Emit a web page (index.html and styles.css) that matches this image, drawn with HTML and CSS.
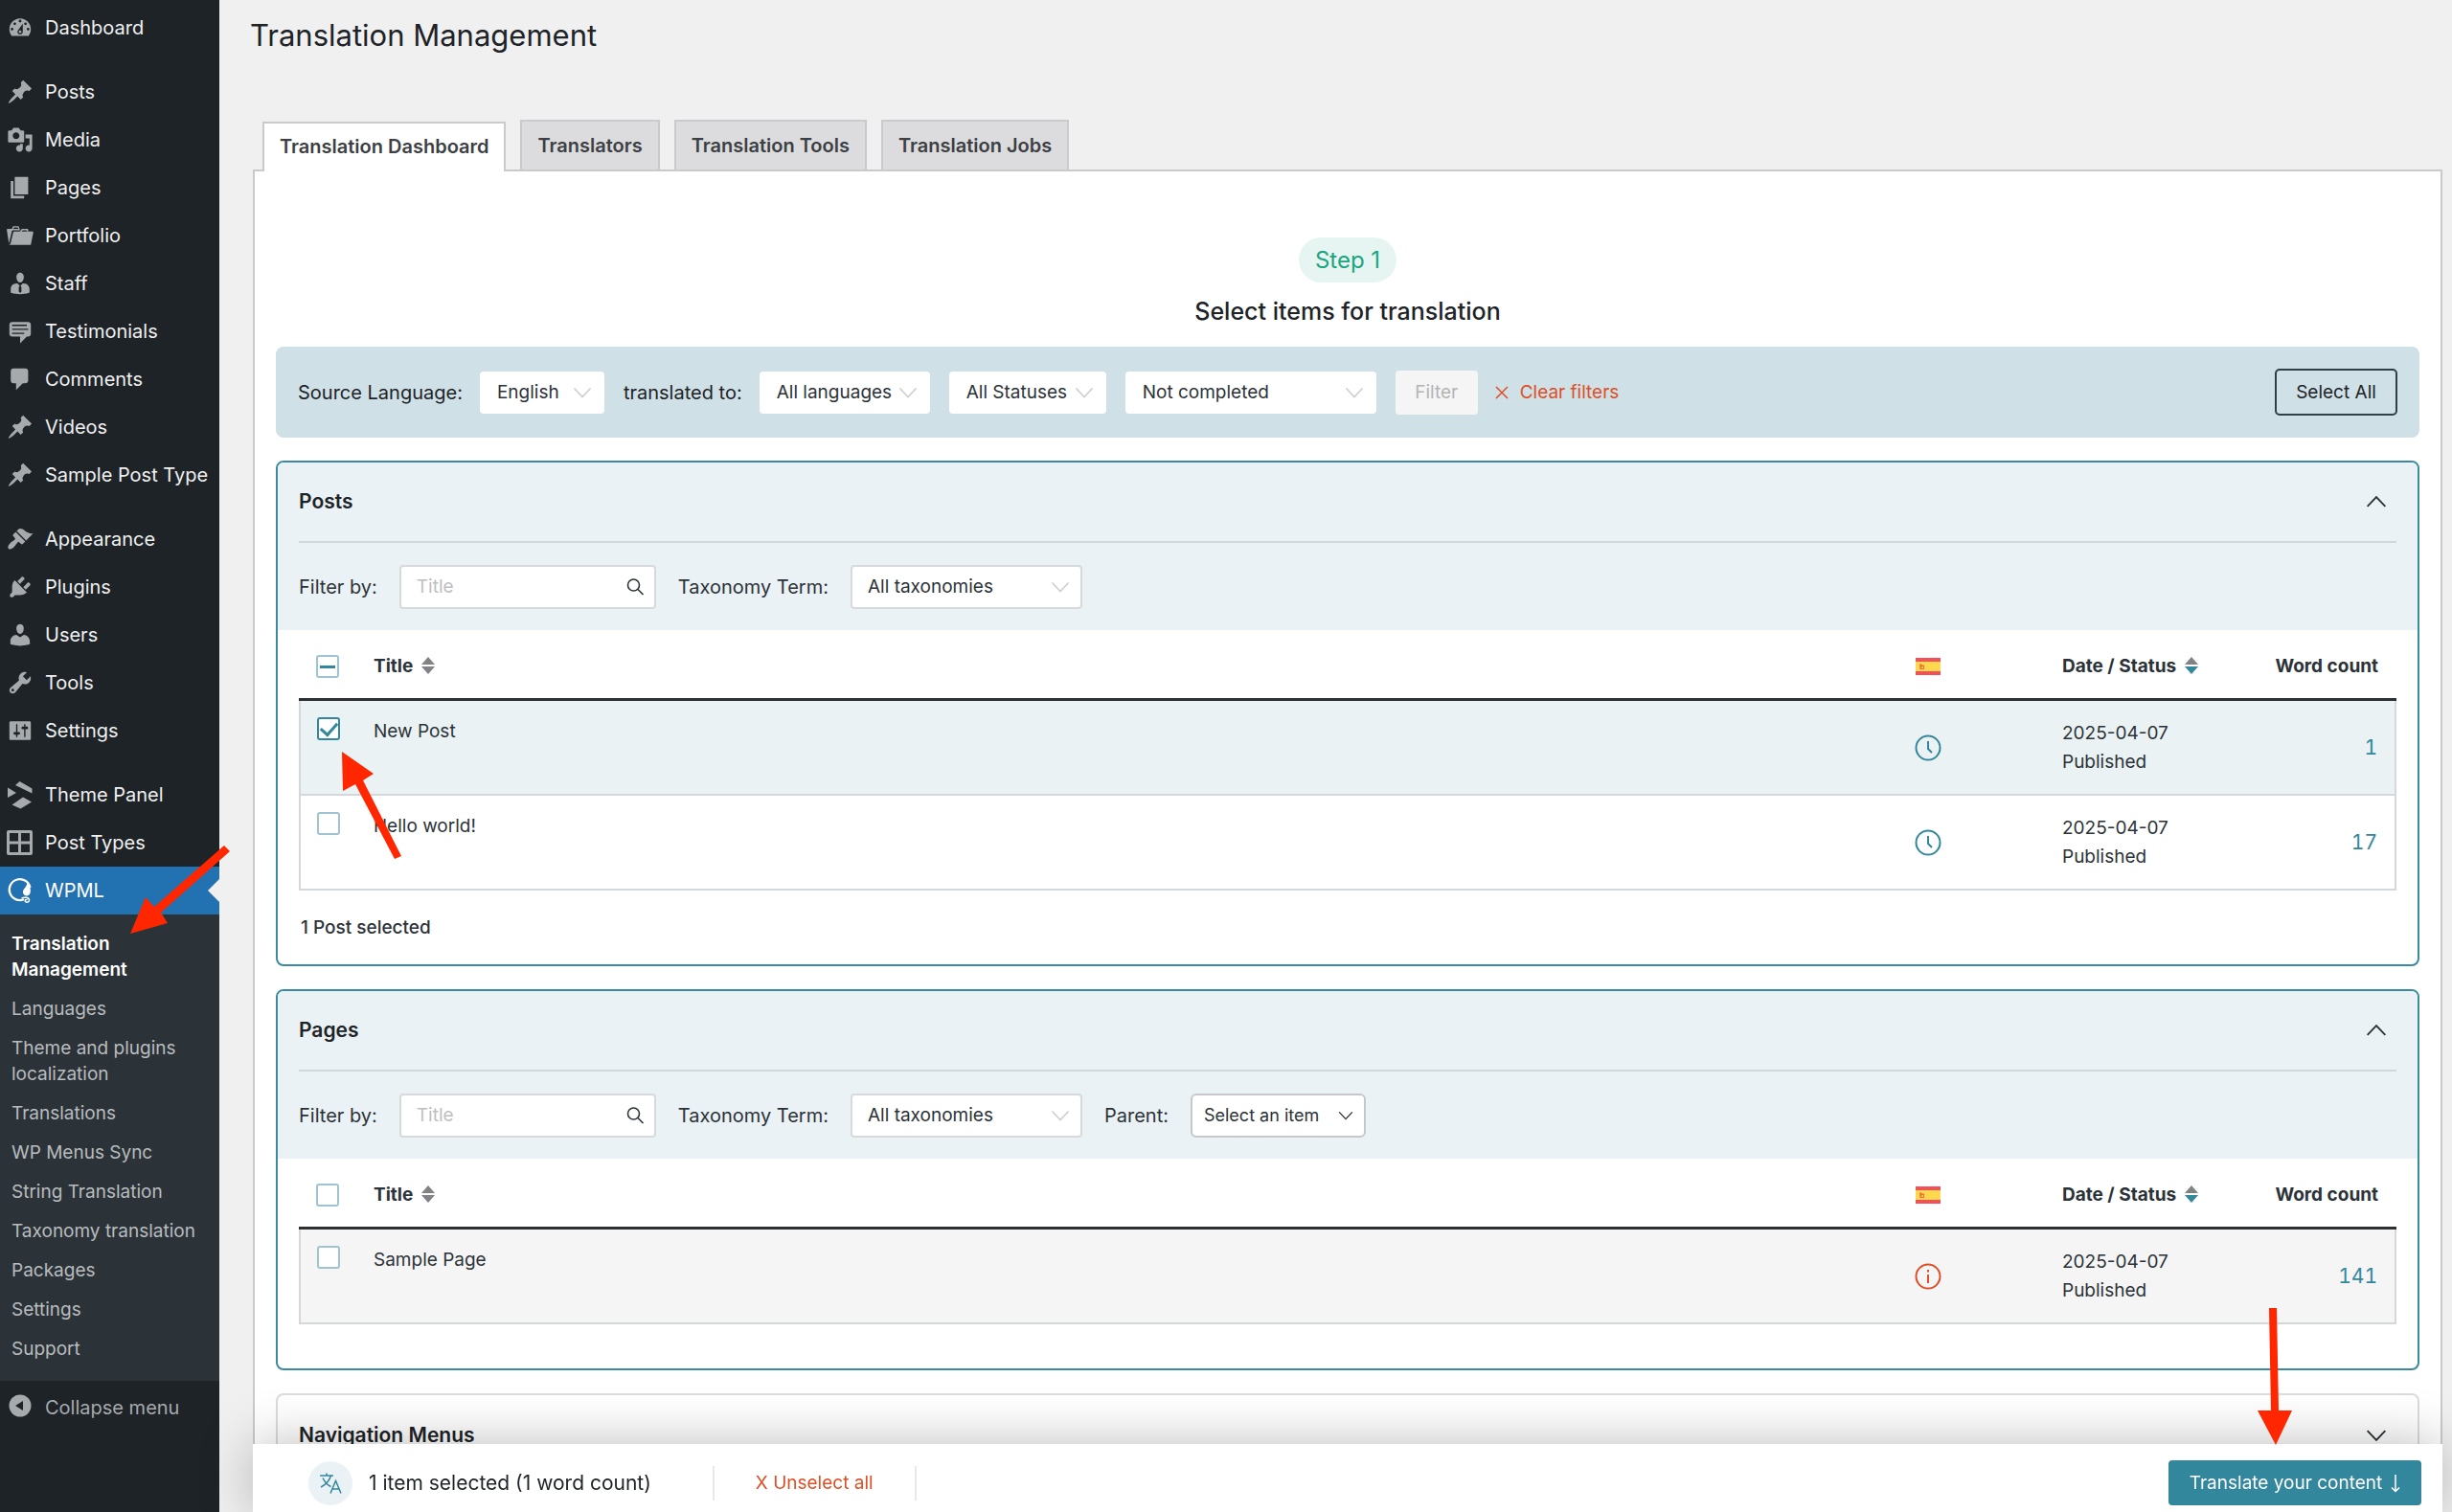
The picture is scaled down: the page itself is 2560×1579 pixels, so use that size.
FILE: index.html
```html
<!DOCTYPE html>
<html lang="en">
<head>
<meta charset="utf-8">
<meta name="viewport" content="width=device-width, initial-scale=1">
<title>Translation Management</title>
<link rel="stylesheet" href="styles.css">
</head>
<body>
<svg class="sprite" aria-hidden="true">
  <symbol id="pin" viewBox="0 0 20 20"><path d="M10.44 3.02l1.82-1.82 6.36 6.35-1.83 1.82c-1.05-.68-2.48-.57-3.41.36l-.75.75c-.92.93-1.04 2.35-.35 3.41l-1.83 1.82-2.41-2.41-2.8 2.79c-.42.42-3.38 2.71-3.8 2.29s1.86-3.39 2.28-3.81l2.79-2.79L4.1 9.36l1.83-1.82c1.05.69 2.48.57 3.4-.36l.75-.75c.93-.92 1.05-2.35.36-3.41z"/></symbol>
  <symbol id="down" viewBox="0 0 20 20"><path d="M1.500 5.500 10 14.500 18.500 5.500" fill="none" stroke="currentColor" stroke-width="1.700"/></symbol>
  <symbol id="search" viewBox="0 0 20 20"><g fill="none" stroke="currentColor" stroke-width="1.600"><circle cx="8.500" cy="8" r="6"/><path d="M13 12.500 18.500 18"/></g></symbol>
  <symbol id="flag" viewBox="0 0 26 18"><path fill="#f4505a" d="M0 0h26v18H0z"/><path fill="#ffd94d" d="M0 4h26v10H0z"/><path fill="#f0703c" d="M4 6.500h2l1 1h2v4.500H4.500z"/><path fill="#ffd94d" d="M6.500 9h1.500v2H6.500z"/></symbol>
  <symbol id="clock" viewBox="0 0 28 28"><g fill="none" stroke="currentColor" stroke-width="2"><circle cx="14" cy="14" r="12.500"/><path d="M14 7v8l4 4"/></g></symbol>
  <symbol id="info" viewBox="0 0 28 28"><circle cx="14" cy="14" r="12.500" fill="none" stroke="currentColor" stroke-width="2"/><path d="M13 7h2v2.500h-2zM13 12h2v9h-2z" fill="currentColor"/></symbol>
  <symbol id="sort" viewBox="0 0 14 18"><path d="M7 0l7 8H0z" fill="#808285"/><path d="M0 10h14l-7 8z" fill="currentColor"/></symbol>
</svg>
<div class="shell">
  <nav class="sidebar" aria-label="Main menu">
    <ul class="menu">
      <li><a href="#"><svg class="icon" viewBox="0 0 20 20"><path d="M3.760 16h12.480c1.100-1.370 1.760-3.110 1.760-5 0-4.420-3.580-8-8-8s-8 3.580-8 8c0 1.890.66 3.630 1.760 5zM10 4c.55 0 1 .45 1 1s-.45 1-1 1-1-.45-1-1 .45-1 1-1zM6 6c.55 0 1 .45 1 1s-.45 1-1 1-1-.45-1-1 .45-1 1-1zm8 0c.55 0 1 .45 1 1s-.45 1-1 1-1-.45-1-1 .45-1 1-1zm-5.370 5.550L12 7v6c0 1.100-.9 2-2 2s-2-.9-2-2c0-.57.24-1.080.63-1.450zM4 10c.55 0 1 .45 1 1s-.45 1-1 1-1-.45-1-1 .45-1 1-1zm12 0c.55 0 1 .45 1 1s-.45 1-1 1-1-.45-1-1 .45-1 1-1zm-5 3c0-.55-.45-1-1-1s-1 .45-1 1 .45 1 1 1 1-.45 1-1z"/></svg>Dashboard</a></li>
      <li class="gap"><a href="#"><svg class="icon"><use href="#pin"/></svg>Posts</a></li>
      <li><a href="#"><svg class="icon" viewBox="0 0 20 20"><path d="M13 11V4c0-.55-.45-1-1-1h-1.670L9 1H5L3.670 3H2c-.55 0-1 .45-1 1v7c0 .55.45 1 1 1h10c.55 0 1-.45 1-1zM7 4.500c1.380 0 2.500 1.120 2.500 2.500S8.380 9.500 7 9.500 4.500 8.380 4.500 7 5.620 4.500 7 4.500zM14 6h5v10.500c0 1.380-1.120 2.500-2.500 2.500S14 17.880 14 16.500s1.120-2.500 2.500-2.500c.17 0 .34.02.5.05V9h-3V6zm-4 8.050V13h2v3.500c0 1.380-1.120 2.500-2.500 2.500S7 17.880 7 16.500 8.120 14 9.500 14c.17 0 .34.02.5.05z"/></svg>Media</a></li>
      <li><a href="#"><svg class="icon" viewBox="0 0 20 20"><path d="M6 15V2h10v13H6zm-1 1h8v2H3V5h2v11z"/></svg>Pages</a></li>
      <li><a href="#"><svg class="icon" viewBox="0 0 20 20"><path d="M4 5H.78c-.37 0-.74.32-.69.84l1.560 9.990S3.500 8.470 3.860 6.700c.11-.53.61-.7.98-.7H10s-.7-2.080-.77-2.310C9.110 3.250 8.890 3 8.450 3H5.140c-.36 0-.7.23-.8.64C4.250 4.040 4 5 4 5zm4.880 0h-4s.42-1 .87-1h2.130c.48 0 1 1 1 1zM2.670 16.250c-.31.47-.76.75-1.260.75h15.730c.54 0 .92-.31 1.030-.83.44-2.190 1.680-8.440 1.680-8.440.07-.5-.3-.73-.62-.73H16V5.530c0-.16-.26-.53-.66-.53h-3.760c-.52 0-.87.58-.87.58L10 7H5.590c-.32 0-.63.19-.69.5 0 0-1.590 6.700-1.720 7.330-.07.37-.22.99-.51 1.420zM15.380 7H11s.58-1 1.130-1h2.290c.71 0 .96 1 .96 1z"/></svg>Portfolio</a></li>
      <li><a href="#"><svg class="icon" viewBox="0 0 20 20"><path d="M7.300 6c-.3-2.200.8-4 2.700-4s3.100 1.800 2.700 4c-.3 1.900-1.300 3.300-2.700 3.300S7.600 7.900 7.300 6zm9.200 6.240c.41.7.5 1.410.5 2.140v2.490c0 .03-.12.08-.29.13-2.200.7-4.500 1-6.700 1-2.300 0-4.700-.3-6.740-1L3 16.870v-2.490c0-.75.07-1.460.46-2.150s.81-1.250 1.500-1.680C5.660 10.120 7.190 10 8 10l1.670 1.670L9 13v3l1.020 1.080L11 16v-3l-.68-1.330L11.970 10c.77 0 2.200.07 2.900.52.71.45 1.210 1.020 1.630 1.720z"/></svg>Staff</a></li>
      <li><a href="#"><svg class="icon" viewBox="0 0 20 20"><path d="M4 3h12c.55 0 1.020.2 1.410.59S18 4.450 18 5v7c0 .55-.2 1.020-.59 1.410S16.550 14 16 14h-1l-5 5v-5H4c-.55 0-1.020-.2-1.410-.59S2 12.550 2 12V5c0-.55.2-1.020.59-1.410S3.450 3 4 3zm11 2H4v1h11V5zm1 3H4v1h12V8zm-3 3H4v1h9v-1z"/></svg>Testimonials</a></li>
      <li><a href="#"><svg class="icon" viewBox="0 0 20 20"><path d="M5 2h9c1.100 0 2 .9 2 2v7c0 1.100-.9 2-2 2h-2l-5 5v-5H5c-1.100 0-2-.9-2-2V4c0-1.100.9-2 2-2z"/></svg>Comments</a></li>
      <li><a href="#"><svg class="icon"><use href="#pin"/></svg>Videos</a></li>
      <li><a href="#"><svg class="icon"><use href="#pin"/></svg>Sample Post Type</a></li>
      <li class="gap"><a href="#"><svg class="icon" viewBox="0 0 20 20"><path d="M14.480 11.060L7.410 3.990l1.500-1.500c.5-.56 2.300-.47 3.510.32 1.210.8 1.430 1.280 2.910 2.100 1.180.64 2.450 1.260 4.450.85zm-.71.71L6.700 4.700 4.930 6.470c-.39.39-.39 1.020 0 1.410l1.060 1.060c.39.39.39 1.030 0 1.420-.6.6-1.430 1.110-2.210 1.690-.35.26-.7.53-1.010.84C1.430 14.230.4 16.080 1.400 17.070c.99 1 2.840-.03 4.180-1.360.31-.31.58-.66.85-1.020.57-.78 1.080-1.610 1.690-2.210.39-.39 1.020-.39 1.410 0l1.060 1.060c.39.39 1.020.39 1.410 0z"/></svg>Appearance</a></li>
      <li><a href="#"><svg class="icon" viewBox="0 0 20 20"><path d="M13.110 4.360L9.870 7.600 8 5.730l3.240-3.240c.35-.34 1.050-.2 1.560.32.52.51.66 1.210.31 1.550zm-8 1.770l.91-1.120 9.010 9.010-1.190.84c-.71.71-2.630 1.160-3.820 1.160H6.140L4.900 17.260c-.59.59-1.540.59-2.120 0-.59-.58-.59-1.530 0-2.120l1.240-1.240v-3.880c0-1.130.4-3.190 1.090-3.890zm7.260 3.970l3.240-3.240c.34-.35 1.040-.21 1.550.31.52.51.66 1.210.31 1.550l-3.240 3.250z"/></svg>Plugins</a></li>
      <li><a href="#"><svg class="icon" viewBox="0 0 20 20"><path d="M10 9.250c-2.270 0-2.730-3.440-2.730-3.440C7 4.020 7.820 2 9.970 2c2.160 0 2.980 2.020 2.710 3.810 0 0-.41 3.440-2.680 3.440zm0 2.570L12.720 10c2.390 0 4.520 2.330 4.520 4.530v2.490s-3.650 1.130-7.240 1.130c-3.650 0-7.240-1.130-7.240-1.130v-2.490c0-2.250 1.940-4.480 4.470-4.480z"/></svg>Users</a></li>
      <li><a href="#"><svg class="icon" viewBox="0 0 20 20"><path d="M16.680 9.770c-1.340 1.340-3.300 1.670-4.950.99l-5.410 6.520c-.99.99-2.590.99-3.580 0s-.99-2.590 0-3.570l6.520-5.420c-.68-1.650-.35-3.610.99-4.950 1.280-1.280 3.120-1.620 4.720-1.060l-2.890 2.890 2.820 2.820 2.860-2.870c.53 1.580.18 3.390-1.080 4.650zM3.810 16.210c.4.39 1.040.39 1.430 0 .4-.4.4-1.040 0-1.430-.39-.4-1.030-.4-1.430 0-.39.39-.39 1.030 0 1.430z"/></svg>Tools</a></li>
      <li><a href="#"><svg class="icon" viewBox="0 0 20 20"><path d="M18 16V4c0-.55-.45-1-1-1H3c-.55 0-1 .45-1 1v12c0 .55.45 1 1 1h14c.55 0 1-.45 1-1zM8 11h1c.55 0 1 .45 1 1s-.45 1-1 1H8v1.500c0 .28-.22.5-.5.5s-.5-.22-.5-.5V13H6c-.55 0-1-.45-1-1s.45-1 1-1h1V5.500c0-.28.22-.5.5-.5s.5.22.5.5V11zm5-2h-1c-.55 0-1-.45-1-1s.45-1 1-1h1V5.500c0-.28.22-.5.5-.5s.5.22.5.5V7h1c.55 0 1 .45 1 1s-.45 1-1 1h-1v5.500c0 .28-.22.5-.5.5s-.5-.22-.5-.5V9z"/></svg>Settings</a></li>
      <li class="gap"><a href="#"><svg class="icon" viewBox="0 0 28 28"><path d="M9 4 13.500 0 26.500 7.500V12.500zM1 6.500 10 12 1 17zM5.500 24.500 17 16.500 26 21.500 14.500 28.500z"/></svg>Theme Panel</a></li>
      <li><a href="#"><svg class="icon" viewBox="0 0 28 28"><path fill-rule="evenodd" d="M2 1h23q2 0 2 2v22q0 2-2 2H2q-2 0-2-2V3q0-2 2-2zM3 4v8.500h9V4zM15 4v8.500h9V4zM3 15.500V24h9v-8.500zM15 15.500V24h9v-8.500z"/></svg>Post Types</a></li>
      <li class="current"><a href="#"><svg class="icon" viewBox="0 0 28 28"><path d="M18 23.200A11 11 0 1 1 24.500 11" fill="none" stroke="#fff" stroke-width="2.200"/><path d="M21.500 5.500c2.500 3 3.700 6.500 3.300 10-.4 3-3 4.800-5.300 3.800-2.800-1.200-3.300-4.300-1.500-6.800C19.700 10.300 21.300 8.500 21.500 5.500z"/><path d="M15.500 22c3-1.500 8-1 8 2 0 2.500-4 3-4.300.8-.1-1.500 1.700-1.700 2-.8" fill="none" stroke="#fff" stroke-width="1.500"/></svg>WPML</a></li>
    </ul>
    <ul class="submenu">
      <li><a class="active" href="#">Translation Management</a></li>
      <li><a href="#">Languages</a></li>
      <li><a href="#">Theme and plugins localization</a></li>
      <li><a href="#">Translations</a></li>
      <li><a href="#">WP Menus Sync</a></li>
      <li><a href="#">String Translation</a></li>
      <li><a href="#">Taxonomy translation</a></li>
      <li><a href="#">Packages</a></li>
      <li><a href="#">Settings</a></li>
      <li><a href="#">Support</a></li>
    </ul>
    <button class="collapse" type="button"><svg class="icon" viewBox="0 0 28 28"><path fill-rule="evenodd" d="M14 .5a11.500 11.500 0 1 1 0 23 11.500 11.500 0 0 1 0-23zM9 12l8 5V7z"/></svg>Collapse menu</button>
  </nav>

  <main class="main">
    <h1>Translation Management</h1>
    <nav class="tabs" aria-label="Sections">
      <a class="tab selected" href="#">Translation Dashboard</a>
      <a class="tab" href="#">Translators</a>
      <a class="tab" href="#">Translation Tools</a>
      <a class="tab" href="#">Translation Jobs</a>
    </nav>
    <div class="panel">
      <header class="step">
        <span class="badge">Step 1</span>
        <h2>Select items for translation</h2>
      </header>

      <form class="filters">
        <label for="source">Source Language:</label>
        <span class="pick plain w-english"><select id="source"><option>English</option></select><svg><use href="#down"/></svg></span>
        <label for="target">translated to:</label>
        <span class="pick plain w-languages"><select id="target"><option>All languages</option></select><svg><use href="#down"/></svg></span>
        <span class="pick plain w-statuses"><select aria-label="Status"><option>All Statuses</option></select><svg><use href="#down"/></svg></span>
        <span class="pick plain w-progress"><select aria-label="Progress"><option>Not completed</option></select><svg><use href="#down"/></svg></span>
        <button class="filter-button" type="button" disabled>Filter</button>
        <button class="clear" type="button"><svg viewBox="0 0 14 14"><path d="M1 1l12 12M13 1L1 13" stroke="currentColor" stroke-width="1.500"/></svg>Clear filters</button>
        <button class="select-all" type="button">Select All</button>
      </form>

      <section class="card">
        <div class="card-head">
          <div class="card-title"><h3>Posts</h3><button type="button" aria-label="Collapse Posts"><svg class="up"><use href="#down"/></svg></button></div>
          <div class="card-filters">
            <label for="post-title">Filter by:</label>
            <span class="search"><input id="post-title" type="text" placeholder="Title"><svg><use href="#search"/></svg></span>
            <label for="post-tax">Taxonomy Term:</label>
            <span class="pick w-tax"><select id="post-tax"><option>All taxonomies</option></select><svg><use href="#down"/></svg></span>
          </div>
        </div>
        <table>
          <colgroup><col class="c-check"><col><col class="c-lang"><col class="c-date"><col class="c-count"></colgroup>
          <thead><tr>
            <th><input class="mixed" type="checkbox" aria-label="Select all posts"></th>
            <th>Title <svg class="sort"><use href="#sort"/></svg></th>
            <th><svg class="flag" role="img" aria-label="Spanish"><use href="#flag"/></svg></th>
            <th>Date / Status <svg class="sort on"><use href="#sort"/></svg></th>
            <th class="num">Word count</th>
          </tr></thead>
          <tbody>
            <tr class="chosen">
              <td class="top"><input id="p1" type="checkbox" checked></td>
              <td class="top"><label for="p1">New Post</label></td>
              <td><svg class="state"><use href="#clock"/></svg></td>
              <td>2025-04-07<br>Published</td>
              <td class="num">1</td>
            </tr>
            <tr>
              <td class="top"><input id="p2" type="checkbox"></td>
              <td class="top"><label for="p2">Hello world!</label></td>
              <td><svg class="state"><use href="#clock"/></svg></td>
              <td>2025-04-07<br>Published</td>
              <td class="num">17</td>
            </tr>
          </tbody>
        </table>
        <p class="tally">1 Post selected</p>
      </section>

      <section class="card">
        <div class="card-head">
          <div class="card-title"><h3>Pages</h3><button type="button" aria-label="Collapse Pages"><svg class="up"><use href="#down"/></svg></button></div>
          <div class="card-filters">
            <label for="page-title">Filter by:</label>
            <span class="search"><input id="page-title" type="text" placeholder="Title"><svg><use href="#search"/></svg></span>
            <label for="page-tax">Taxonomy Term:</label>
            <span class="pick w-tax"><select id="page-tax"><option>All taxonomies</option></select><svg><use href="#down"/></svg></span>
            <label for="parent">Parent:</label>
            <span class="pick w-parent"><select id="parent"><option>Select an item</option></select><svg><use href="#down"/></svg></span>
          </div>
        </div>
        <table>
          <colgroup><col class="c-check"><col><col class="c-lang"><col class="c-date"><col class="c-count"></colgroup>
          <thead><tr>
            <th><input type="checkbox" aria-label="Select all pages"></th>
            <th>Title <svg class="sort"><use href="#sort"/></svg></th>
            <th><svg class="flag" role="img" aria-label="Spanish"><use href="#flag"/></svg></th>
            <th>Date / Status <svg class="sort on"><use href="#sort"/></svg></th>
            <th class="num">Word count</th>
          </tr></thead>
          <tbody>
            <tr class="striped">
              <td class="top"><input id="g1" type="checkbox"></td>
              <td class="top"><label for="g1">Sample Page</label></td>
              <td><svg class="state alert"><use href="#info"/></svg></td>
              <td>2025-04-07<br>Published</td>
              <td class="num">141</td>
            </tr>
          </tbody>
        </table>
      </section>

      <section class="card closed">
        <div class="card-title"><h3>Navigation Menus</h3><button type="button" aria-label="Expand Navigation Menus"><svg><use href="#down"/></svg></button></div>
      </section>
    </div>
  </main>
</div>

<footer class="bar">
  <span class="bubble"><svg viewBox="0 0 24 24"><g fill="none" stroke="currentColor" stroke-width="1.500"><path d="M1 4h14M8 1.500V4M12.500 4C11 9 7 13.500 2 16M4 6.500c2 4 5 7.500 8.500 9"/><path d="M12 22.500 17.500 9.500 23 22.500M14 18h7"/></g></svg></span>
  <span class="bar-text">1 item selected (1 word count)</span>
  <span class="rule"></span>
  <button class="unselect" type="button">X Unselect all</button>
  <span class="rule"></span>
  <button class="translate" type="button">Translate your content<svg viewBox="0 0 10 20"><path d="M5 1v17M1 14.500l4 4 4-4" fill="none" stroke="currentColor" stroke-width="1.500"/></svg></button>
</footer>

<svg class="arrow arrow-menu" viewBox="0 0 104 94" aria-hidden="true"><path d="M98 1l6 6-72 64 7 11L0 93l16-38 9 10z"/></svg>
<svg class="arrow arrow-row" viewBox="0 0 62 112" aria-hidden="true"><path d="M0 0l33 23-11 7 40 79-7 3-41-78-13 7z"/></svg>
<svg class="arrow arrow-action" viewBox="0 0 36 143" aria-hidden="true"><path d="M12 0h8l2 107h14L19 143 0 107h14z"/></svg>
</body>
</html>
```
FILE: styles.css
```css
* { box-sizing: border-box; }
body { margin: 0; background: #f0f0f1; color: #2c3338; font-family: Inter, "Liberation Sans", sans-serif; font-size: 19px; line-height: 30px; }
h1, h2, h3, p, ul { margin: 0; padding: 0; }
ul { list-style: none; }
a { color: inherit; text-decoration: none; }
button, input, select { font: inherit; color: inherit; margin: 0; }
button { background: none; border: 0; padding: 0; cursor: pointer; }
svg { display: block; flex: none; }
.sprite { display: none; }

.shell { display: flex; min-height: 100vh; }

/* Sidebar */
.sidebar { flex: none; width: 229px; padding-top: 4px; background: #1d2327; color: #f0f0f1; font-size: 20px; }
.menu a, .collapse { display: flex; align-items: center; gap: 12px; height: 50px; padding-left: 7px; white-space: nowrap; }
.gap { margin-top: 17px; }
.icon { width: 28px; height: 28px; fill: #a7aaad; overflow: visible; }
.current { position: relative; background: #2271b1; color: #fff; }
.current .icon { fill: #fff; }
.current::after { content: ""; position: absolute; right: 0; top: 13px; border: 12px solid transparent; border-left: 0; border-right-color: #f0f0f1; }
.submenu { padding: 10px 0 13px; background: #2c3338; color: #b8bcbf; font-size: 19px; line-height: 27px; }
.submenu a { display: block; padding: 7px 24px 7px 12px; }
.submenu .active { color: #fff; font-weight: 600; padding-right: 48px; }
.collapse { margin-top: 3px; color: #a7aaad; }

/* Header and tabs */
.main { flex: 1; min-width: 0; padding: 16px 10px 0 35px; }
h1 { margin-left: -3px; font-size: 31px; font-weight: 400; line-height: 42px; color: #1d2327; }
.tabs { display: flex; align-items: flex-end; gap: 15px; padding: 67px 0 0 10px; }
.tab { height: 52px; padding: 0 16px; border: 2px solid #c9cacc; border-bottom: 0; background: #dcdcde; color: #3c3f43; font-size: 20px; font-weight: 600; line-height: 50px; }
.tab.selected { position: relative; margin-bottom: -2px; background: #fff; line-height: 49px; }
.panel { border: 2px solid #c9cacc; padding: 0 22px 20px; background: #fff; }

.step { display: flex; flex-direction: column; align-items: center; gap: 10px; padding: 69px 0 17px; }
.badge { padding: 0 17px; border-radius: 24px; background: #e6f5f1; color: #1ba580; font-size: 24px; line-height: 47px; }
h2 { font-size: 25px; font-weight: 500; line-height: 40px; color: #1d2327; }

/* Filter bar */
.filters { display: flex; align-items: center; height: 95px; padding: 0 23px; border-radius: 8px; background: #cfe0e6; color: #1d2327; font-size: 20px; }
.filters label { margin-right: 18px; }
.filters .pick { margin-right: 20px; }
.pick { display: grid; align-items: center; }
.pick select, .pick svg { grid-area: 1 / 1; }
.pick select { width: 100%; height: 46px; padding: 0 16px; appearance: none; border: 2px solid #d7dadc; border-radius: 4px; background: #fff; color: #2c3338; font-size: 19px; }
.pick svg { justify-self: end; width: 20px; height: 20px; margin-right: 13px; color: #cfcfcf; pointer-events: none; }
.plain select { height: 44px; border-color: #fff; }
.w-english { width: 130px; }
.w-languages { width: 178px; }
.w-statuses { width: 164px; }
.w-progress { width: 262px; }
.w-tax { width: 242px; }
.w-parent { width: 183px; }
.w-parent select { padding: 0 12px; border-color: #c6c8ca; border-radius: 6px; font-size: 18px; }
.w-parent svg { width: 16px; height: 16px; color: #2c3338; }
.filter-button { width: 86px; height: 46px; border-radius: 4px; background: #f5f5f5; color: #b4b4b4; font-size: 19px; }
.clear { display: flex; align-items: center; gap: 12px; margin-left: 18px; color: #dd4f27; font-size: 19px; }
.clear svg { width: 14px; height: 14px; }
.select-all { width: 128px; height: 49px; margin-left: auto; border: 2px solid #2f4048; border-radius: 5px; font-size: 19px; }

/* Item cards */
.card { margin-top: 24px; padding-bottom: 46px; border: 2px solid #3a8ba0; border-radius: 8px; overflow: hidden; }
.card-head { padding: 0 22px; background: #eaf2f5; }
.card-title { display: flex; align-items: center; justify-content: space-between; height: 84px; padding-right: 10px; }
.card-head .card-title { border-bottom: 2px solid #cfd8db; }
.card-title svg { width: 22px; height: 22px; }
.up { rotate: 180deg; }
h3 { font-size: 21px; font-weight: 600; color: #1d2327; }
.card-filters { display: flex; align-items: center; gap: 23px; height: 91px; font-size: 20px; }
.search { display: grid; align-items: center; width: 268px; }
.search input, .search svg { grid-area: 1 / 1; }
.search input { width: 100%; height: 46px; padding: 0 16px; border: 2px solid #d7dadc; border-radius: 4px; background: #fff; font-size: 19px; }
.search input::placeholder { color: #bfbfbf; opacity: 1; }
.search svg { justify-self: end; width: 20px; height: 20px; margin-right: 12px; }
.closed { padding: 0 22px; border-color: #dcdcde; }

table { width: calc(100% - 44px); margin: 0 22px; border-spacing: 0; table-layout: fixed; }
.c-check { width: 78px; }
.c-lang { width: 160px; }
.c-date { width: 188px; }
.c-count { width: 161px; }
th { height: 74px; padding: 5px 0 0; border-bottom: 3px solid #2c3033; text-align: left; font-weight: 700; white-space: nowrap; }
td { height: 99px; padding: 0; border-bottom: 2px solid #d5d8da; }
td:first-child { border-left: 2px solid #d5d8da; }
td:last-child { border-right: 2px solid #d5d8da; color: #33879d; font-size: 21px; font-variant-numeric: tabular-nums; }
th:first-child { padding-left: 18px; }
td:first-child { padding-left: 17px; }
td.top { padding-top: 17px; vertical-align: top; }
th.num { padding-right: 19px; text-align: right; }
td.num { padding-right: 18px; text-align: right; }
.chosen td { background: #eaf2f4; }
.striped td { background: #f5f5f5; }
.sort { display: inline-block; width: 14px; height: 18px; margin-left: 4px; color: #808285; vertical-align: -2px; }
.sort.on { color: #33879d; }
.flag { width: 28px; height: 18px; margin-left: 6px; }
.state { width: 28px; height: 28px; margin-left: 6px; color: #33879d; }
.alert { color: #dd4f27; }
.tally { padding: 24px 0 0 24px; font-weight: 500; margin-bottom: -23px; }

input[type="checkbox"] { display: grid; place-items: center; width: 24px; height: 24px; appearance: none; border: 2px solid #9fc4cf; border-radius: 3px; background: #fff; }
input[type="checkbox"]:checked { border-color: #33879d; }
input[type="checkbox"]:checked::before { content: ""; width: 8px; height: 14px; margin-top: -4px; border: solid #33879d; border-width: 0 3px 3px 0; rotate: 42deg; }
.mixed::before { content: ""; width: 16px; height: 3px; background: #33879d; }

/* Bottom action bar */
.bar { position: fixed; left: 264px; right: 10px; bottom: 0; display: flex; align-items: center; height: 71px; padding: 10px 22px 0 58px; background: #fff; box-shadow: 0 0 56px rgba(0, 0, 0, .27); color: #1d2327; }
.bubble { display: grid; place-items: center; width: 46px; height: 46px; margin-right: 17px; border-radius: 50%; background: #eaf2f5; color: #33879d; }
.bubble svg { width: 24px; height: 24px; }
.bar-text { font-size: 21px; margin-right: 64px; }
.rule { width: 2px; height: 36px; background: #e6e8ea; }
.unselect { margin: 0 43px; color: #dd4f27; }
.translate { display: flex; align-items: center; justify-content: center; gap: 9px; width: 264px; height: 47px; margin-left: auto; border-radius: 4px; background: #33879d; color: #fff; }
.translate svg { width: 10px; height: 20px; }

/* Annotation arrows lying over the page */
.arrow { position: absolute; fill: #ff2600; pointer-events: none; }
.arrow-menu { left: 136px; top: 882px; width: 104px; height: 94px; }
.arrow-row { left: 357px; top: 785px; width: 62px; height: 112px; }
.arrow-action { right: 167px; top: 1366px; width: 36px; height: 143px; }
```
